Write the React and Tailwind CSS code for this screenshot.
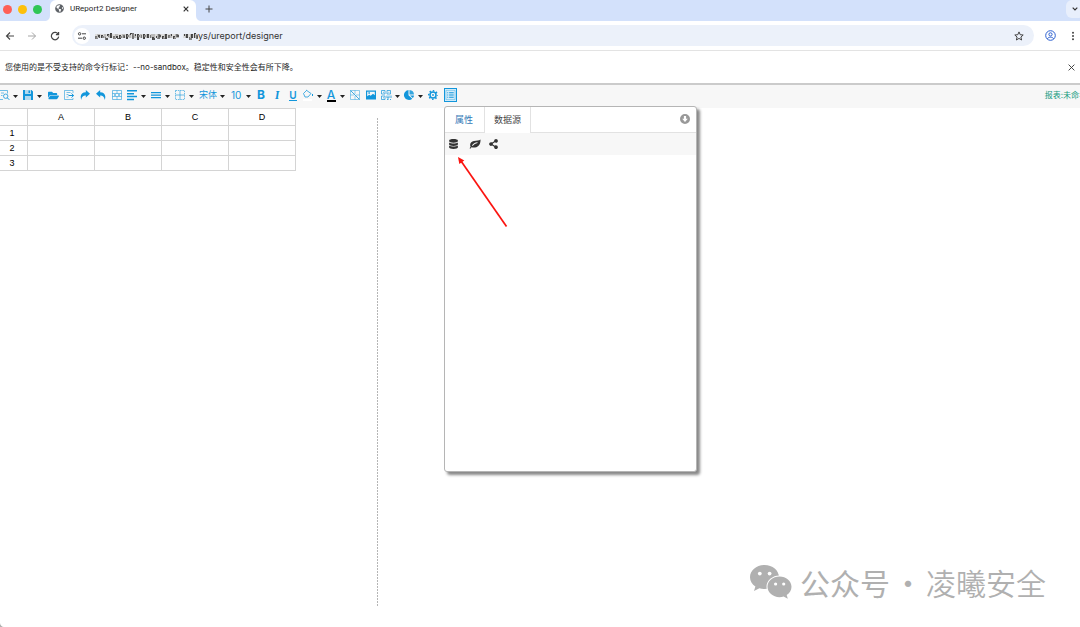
import React, { useState } from 'react';
import { FaDatabase, FaShareAlt, FaFolderOpen, FaGlobeAmericas } from 'react-icons/fa';

const MOSAIC = [
  [0, 4, 3], [3, 3, 2], [6, 3, 3], [10, 5, 3], [12, 2, 2], [15, 1, 5], [18, 4, 3], [21, 4, 2], [24, 3, 4],
  [28, 3, 3], [31, 2, 5], [35, 1, 2], [37, 1, 6], [40, 2, 2], [42, 2, 6], [46, 3, 3], [48, 2, 5], [52, 2, 4],
  [55, 3, 3], [57, 5, 3], [61, 4, 2], [63, 2, 5], [67, 4, 3], [70, 2, 5], [73, 3, 3], [76, 2, 2], [78, 4, 3],
  [81, 2, 3], [89, 2, 2], [91, 2, 4], [94, 5, 3], [96, 2, 4], [99, 1, 5], [101, 3, 4],
];

function Icon({ children, className = 'w-3 h-3', stroke = false, viewBox = '0 0 12 12' }) {
  return (
    <svg
      className={`shrink-0 ${className}`}
      viewBox={viewBox}
      fill={stroke ? 'none' : 'currentColor'}
      stroke={stroke ? 'currentColor' : 'none'}
      strokeWidth="1"
      aria-hidden="true"
    >
      {children}
    </svg>
  );
}

function Caret() {
  return (
    <svg className="w-[5px] h-[3px] shrink-0 mt-0.5" viewBox="0 0 5 3" fill="#222" aria-hidden="true">
      <path d="M0 0h5L2.500 3z" />
    </svg>
  );
}

function Tool({ label, children }) {
  return (
    <button type="button" title={label} aria-label={label} className="w-4 h-5 flex items-center justify-center shrink-0">
      {children}
    </button>
  );
}

function MenuTool({ label, tight, children }) {
  return (
    <button
      type="button"
      title={label}
      aria-label={label}
      aria-haspopup="true"
      className={`h-5 pl-px flex items-center gap-[3px] shrink-0 ${tight ? 'w-[23px]' : 'w-6'}`}
    >
      {children}
      <Caret />
    </button>
  );
}

function BrowserTabs() {
  return (
    <div className="h-[21px] flex items-center bg-[#d3e1fb]">
      <div className="w-[50px] pl-[3px] pb-[3px] flex items-center gap-1.5 shrink-0">
        <span className="w-[9px] h-[9px] rounded-full bg-[#fe5f57]" />
        <span className="w-[9px] h-[9px] rounded-full bg-[#fdc00a]" />
        <span className="w-[9px] h-[9px] rounded-full bg-[#2fc655]" />
      </div>
      <div className="relative w-[146px] h-full pl-[5px] pr-1.5 pb-1 flex items-center bg-white rounded-t-md shrink-0">
        <svg className="absolute -left-1.5 bottom-0 w-1.5 h-1.5" viewBox="0 0 6 6" fill="#fff" aria-hidden="true">
          <path d="M6 0v6H0c4 0 6-2 6-6z" />
        </svg>
        <svg className="absolute -right-1.5 bottom-0 w-1.5 h-1.5" viewBox="0 0 6 6" fill="#fff" aria-hidden="true">
          <path d="M0 0v6h6C2 6 0 4 0 0z" />
        </svg>
        <FaGlobeAmericas className="w-[9px] h-[9px] text-[#5f6368]" />
        <span className="ml-1.5 text-[8px] leading-3 text-[#1f1f1f] font-[Roboto,sans-serif]">UReport2 Designer</span>
        <button type="button" aria-label="Close tab" className="ml-auto w-2 h-2 flex items-center justify-center text-[#333]">
          <Icon stroke className="w-1.5 h-1.5" viewBox="0 0 6 6"><path d="M.7.700l4.600 4.600M5.300.700L.7 5.300" strokeWidth="1.200" /></Icon>
        </button>
      </div>
      <button type="button" aria-label="New tab" className="ml-2 mb-1 w-2.5 h-2.5 text-[#444]">
        <Icon stroke className="w-2.5 h-2.5" viewBox="0 0 10 10"><path d="M5 1.500v7M1.500 5h7" /></Icon>
      </button>
      <button type="button" aria-label="Search tabs" className="ml-auto mb-1 -mr-1 w-[18px] h-[18px] flex items-center justify-center rounded-md bg-[#e8effc] text-[#333]">
        <Icon stroke className="w-1.5 h-1.5" viewBox="0 0 6 6"><path d="M.7 1.700L3 4l2.300-2.300" strokeWidth="1.200" /></Icon>
      </button>
    </div>
  );
}

function AddressBar() {
  return (
    <div className="h-[30px] pl-[5px] pr-0.5 flex items-center border-b border-[#e3e3e3] text-[#444]">
      <button type="button" aria-label="Back">
        <Icon stroke className="w-2.5 h-2.5" viewBox="0 0 10 10"><path d="M9 5H1.500M5 1.500L1.500 5 5 8.500" strokeWidth="1.100" /></Icon>
      </button>
      <button type="button" aria-label="Forward" className="ml-3 text-[#a5a5a5]">
        <Icon stroke className="w-2.5 h-2.5" viewBox="0 0 10 10"><path d="M1 5h7.500M5 1.500L8.500 5 5 8.500" /></Icon>
      </button>
      <button type="button" aria-label="Reload" className="ml-[13px]">
        <Icon stroke className="w-2.5 h-2.5" viewBox="0 0 10 10"><path d="M8.300 3.300A3.700 3.700 0 1 0 8.700 5.700M8.600 1v2.700H5.900" strokeWidth="1.200" /></Icon>
      </button>
      <div className="ml-3 h-[21px] flex-1 flex items-center rounded-full bg-[#ecf1fa] pl-0.5 pr-2.5">
        <span className="w-4 h-4 rounded-full bg-white flex items-center justify-center">
          <Icon stroke className="w-2.5 h-2.5" viewBox="0 0 10 10">
            <circle cx="2.600" cy="2.800" r="1.200" />
            <circle cx="7.300" cy="7.200" r="1.200" />
            <path d="M5 2.800h4M1 7.200h4" />
          </Icon>
        </span>
        <svg className="ml-[5px] w-[103px] h-2.5 shrink-0" viewBox="0 0 103 10" aria-hidden="true">
          {MOSAIC.map(([x, y, h], i) => (
            <g key={x}>
              <rect x={x - 1} y="3" width="4" height="4" fill={i % 2 ? '#bbb' : '#ddd'} />
              <rect x={x} y={y + 1} width="2" height={h} fill={i % 3 ? '#444' : '#777'} />
              <rect x={x + 1} y={y + 2} width="2" height="2" fill={i % 2 ? '#555' : '#888'} />
            </g>
          ))}
        </svg>
        <input
          type="text"
          aria-label="Address"
          defaultValue="ys/ureport/designer"
          className="min-w-0 flex-1 bg-transparent text-[9px] leading-4 text-[#333] outline-none"
        />
        <button type="button" aria-label="Bookmark">
          <Icon stroke className="w-2.5 h-2.5" viewBox="0 0 10 10">
            <path d="M5 .9l1.200 2.800 3 .3-2.300 2 .7 3L5 7.400 2.400 9l.7-3L.8 4l3-.3z" />
          </Icon>
        </button>
      </div>
      <button type="button" aria-label="Profile" className="ml-[11px] text-[#2b5fd0]">
        <Icon stroke className="w-[11px] h-[11px]" viewBox="0 0 11 11">
          <circle cx="5.500" cy="5.500" r="4.800" />
          <circle cx="5.500" cy="4.400" r="1.600" />
          <path d="M2.300 8.700c1.500-2 4.900-2 6.400 0" />
        </Icon>
      </button>
      <button type="button" aria-label="More" className="ml-3">
        <Icon className="w-2.5 h-2.5" viewBox="0 0 10 10">
          <circle cx="5" cy="1.700" r="1" />
          <circle cx="5" cy="5" r="1" />
          <circle cx="5" cy="8.300" r="1" />
        </Icon>
      </button>
    </div>
  );
}

function InfoBar() {
  return (
    <div className="h-[34px] pl-[5px] pr-[5px] flex items-center justify-between border-b-2 border-[#cbcbcb]">
      <p className="text-[8px] leading-3 text-[#1f1f1f]">
        您使用的是不受支持的命令行标记：--no-sandbox。稳定性和安全性会有所下降。
      </p>
      <button type="button" aria-label="Dismiss" className="text-[#333]">
        <Icon stroke className="w-[7px] h-[7px]" viewBox="0 0 7 7"><path d="M.6.600l5.800 5.800M6.400.600L.6 6.400" strokeWidth=".9" /></Icon>
      </button>
    </div>
  );
}

function Toolbar() {
  return (
    <div className="h-[23px] pb-[3px] flex items-center bg-[#f7f7f7] text-[#1296db] overflow-hidden">
      <div role="toolbar" className="-ml-[3px] flex items-center shrink-0">
        <MenuTool label="预览">
          <Icon stroke>
            <path d="M1.500 1.500h8v3M1.500 1v9.500H5M3 4h3M3 6.500h1.500" opacity=".6" />
            <circle cx="7.700" cy="7.200" r="2.200" opacity=".8" />
            <path d="M9.300 8.800l2 2" />
          </Icon>
        </MenuTool>
        <MenuTool label="保存">
          <Icon>
            <path fillRule="evenodd" d="M1 1h8.500L11 2.500V11H1zM3 1v4h6V1zM3 7v4h6V7z" />
            <path d="M3 1h6v4H3zM3 7h6v4H3z" opacity=".3" />
            <path d="M6.500 1.500h1.500V4H6.500z" />
          </Icon>
        </MenuTool>
        <Tool label="打开"><FaFolderOpen className="w-[11px] h-[11px]" /></Tool>
        <Tool label="导入">
          <Icon stroke>
            <path d="M10 4V1.500H1.500v9H10V9M3.500 3.500h4M3.500 5.500h2M3.500 8h2" opacity=".55" />
            <path d="M5.500 6.500h5M8.500 4.500l2.200 2-2.200 2" />
          </Icon>
        </Tool>
        <Tool label="重做">
          <Icon className="w-2.5 h-2.5"><path d="M7 0l5 4.500L7 9V6.500C4 6.500 2.300 7.500 1.500 12-.5 6 2 2.700 7 2.600z" /></Icon>
        </Tool>
        <Tool label="撤消">
          <Icon className="w-2.5 h-2.5"><path d="M5 0L0 4.500 5 9V6.500c3 0 4.700 1 5.500 5.500 2-6-.5-9.300-5.500-9.400z" /></Icon>
        </Tool>
        <Tool label="合并单元格">
          <Icon stroke>
            <path d="M1.500 1.500h9v9h-9zM1.500 4.500h9M1.500 7.500h9M6 1.500v3M6 7.500v3" opacity=".55" />
            <path d="M3 6h2M7 6h2" />
          </Icon>
        </Tool>
        <MenuTool label="对齐">
          <Icon><path d="M1 1h10v1.500H1zM1 3.900h7v1.500H1zM1 6.800h10v1.500H1zM1 9.700h7v1.500H1z" /></Icon>
        </MenuTool>
        <MenuTool label="垂直对齐">
          <Icon><path d="M1 3h10v1.200H1zM1 5.500h10v1.200H1zM1 8h10v1.200H1z" /></Icon>
        </MenuTool>
        <MenuTool label="边框">
          <Icon stroke>
            <path d="M1.500 1.500h9v9h-9z" strokeDasharray="1.500 .8" opacity=".6" />
            <path d="M6 1.500v9M1.500 6h9" opacity=".6" />
          </Icon>
        </MenuTool>
        <label className="h-5 pl-0.5 pr-1 flex items-center gap-[3px] text-[9px]">
          <select aria-label="字体" className="w-[18px] appearance-none bg-transparent outline-none">
            <option>宋体</option>
          </select>
          <Caret />
        </label>
        <label className="h-5 pl-0.5 pr-0.5 flex items-center gap-[3px] text-[10px]">
          <select aria-label="字号" className="w-3 appearance-none bg-transparent outline-none">
            <option>10</option>
          </select>
          <Caret />
        </label>
        <Tool label="加粗"><span className="font-bold text-xs leading-3">B</span></Tool>
        <Tool label="斜体"><span className="font-serif font-bold italic text-xs leading-3">I</span></Tool>
        <Tool label="下划线"><span className="text-[10px] leading-[10px] font-semibold border-b border-current">U</span></Tool>
        <MenuTool label="背景色" tight>
          <Icon stroke>
            <path d="M4 1l5 3.500L6 8H3L1.500 4.500 4.500 1.500" opacity=".75" />
            <path d="M10.500 5v2" />
            <path d="M1 11h9" stroke="#fff" strokeWidth="2" />
          </Icon>
        </MenuTool>
        <MenuTool label="字体颜色" tight>
          <span className="w-3 flex flex-col items-center text-xs leading-[11px] font-medium">
            A
            <span className="w-[9px] h-0.5 bg-black" />
          </span>
        </MenuTool>
        <Tool label="斜表头">
          <Icon stroke>
            <path d="M1.500 1.500h9v9h-9zM1.500 6H5M6 1.500V5M7 6h3.500M6 7v3.500" opacity=".45" />
            <path d="M1.500 1.500l9 9" opacity=".8" />
          </Icon>
        </Tool>
        <Tool label="图片">
          <Icon><path fillRule="evenodd" d="M1 1.500h10v9H1zM2.200 2.700v4.500l2-1.500 1.500 1 2.300-2 1.800 1.500V2.700zM3.400 3.300h1.500v1.500H3.400z" /></Icon>
        </Tool>
        <MenuTool label="二维码" tight>
          <Icon stroke>
            <path d="M1.500 1.500h3.500v3.500H1.500zM7 1.500h3.500v3.500H7zM1.500 7h3.500v3.500H1.500z" opacity=".7" />
            <path d="M3 3.300h.8M8.500 3.300h.8M3 8.800h.8M7 6.500v2.500h2V6.500M11 6.500v2.500M7 10.500h1.500M10 10.500h1" opacity=".8" />
          </Icon>
        </MenuTool>
        <MenuTool label="图表" tight>
          <Icon>
            <path d="M5.500 1v5.200l3.800 3.500A5 5 0 1 1 5.500 1z" />
            <path d="M6.500 1A4.800 4.800 0 0 1 11 5.500H6.500z" opacity=".85" />
            <path d="M7 6.500h4a4 4 0 0 1-1.200 2.600z" />
          </Icon>
        </MenuTool>
        <Tool label="设置">
          <Icon stroke>
            <circle cx="6" cy="6" r="3" strokeWidth="1.500" />
            <circle cx="6" cy="6" r="4.300" strokeWidth="1.400" strokeDasharray="1.500 1.877" strokeDashoffset=".75" />
            <circle cx="6" cy="6" r=".9" fill="currentColor" stroke="none" />
          </Icon>
        </Tool>
        <button
          type="button"
          aria-label="属性面板"
          aria-pressed="true"
          className="ml-[3px] w-[13px] h-3.5 flex items-center justify-center border border-[#1296db] bg-[#d5edfa]"
        >
          <Icon className="w-[11px] h-3" stroke>
            <path d="M1 1h10v10H1z" opacity=".4" />
            <path d="M2.500 3.500h1M4.500 3.500h5M2.500 6h1M4.500 6h5M2.500 8.500h1M4.500 8.500h5" strokeWidth="1.200" />
          </Icon>
        </button>
      </div>
      <span className="ml-auto -mr-[7px] shrink-0 text-[8px] leading-3 text-[#129a7d]">报表:未命名</span>
    </div>
  );
}

function Sheet() {
  const columns = ['A', 'B', 'C', 'D'];
  return (
    <table className="-ml-1 w-[300px] table-fixed border-collapse text-[9px] leading-[14px] text-black font-['Liberation_Sans','Noto_Sans_CJK_SC',sans-serif]">
      <thead>
        <tr>
          <th className="w-[31px] h-[17px] p-0 border border-[#d4d4d4]" />
          {columns.map((c) => (
            <th key={c} scope="col" className="p-0 border border-[#d4d4d4] font-medium">{c}</th>
          ))}
        </tr>
      </thead>
      <tbody>
        {[1, 2, 3].map((row) => (
          <tr key={row}>
            <th scope="row" className="p-0 border border-[#d4d4d4] font-medium">{row}</th>
            {columns.map((c) => (
              <td key={c} className="p-0 border border-[#d4d4d4]" />
            ))}
          </tr>
        ))}
      </tbody>
    </table>
  );
}

function PropertyPanel() {
  const [tab, setTab] = useState('source');
  const tabs = [
    { id: 'props', label: '属性' },
    { id: 'source', label: '数据源' },
  ];

  return (
    <section className="absolute left-[444px] top-[106px] w-[253px] h-[366px] bg-white border border-[#b5b5b5] rounded-[3px] shadow-[3px_3px_3px_#888]">
      <div className="h-[26px] flex items-end border-b border-[#e2e2e2]">
        <div role="tablist" className="flex">
          {tabs.map((t) => (
            <button
              key={t.id}
              type="button"
              role="tab"
              aria-selected={tab === t.id}
              onClick={() => setTab(t.id)}
              className={`-mb-px h-[26px] text-[9px] ${
                tab === t.id ? 'px-[9px] bg-white border-x border-[#e2e2e2] text-[#444]' : 'pl-2.5 pr-[11px] text-[#337ab7]'
              }`}
            >
              {t.label}
            </button>
          ))}
        </div>
        <button type="button" aria-label="收起" className="ml-auto mr-1.5 mb-2 text-[#999]">
          <Icon className="w-2.5 h-2.5" viewBox="0 0 10 10">
            <path fillRule="evenodd" d="M5 0a5 5 0 1 0 0 10A5 5 0 0 0 5 0zM3.900 2h2.200v2.700h1.700L5 8 2.200 4.700h1.700z" />
          </Icon>
        </button>
      </div>
      <div className="h-[22px] pl-1 flex items-center bg-[#f7f7f7] text-[#333]">
        <button type="button" aria-label="添加数据库连接" className="w-5"><FaDatabase className="w-[9px] h-[10px]" /></button>
        <button type="button" aria-label="添加Spring Bean数据源" className="w-5">
          <Icon className="w-3 h-3">
            <path fillRule="evenodd" d="M11.500 1.500c.2 4-1.500 7.500-5.500 8-1.500.2-2.600-.2-3.500-.2L1.300 10.800.6 10.200l1-1.400C.3 6 2 3.500 5 3c2.700-.4 5-.2 6.500-1.500zM8.500 4.300C6 4.600 4 5.700 3 7.500l.6.500C5 6.300 6.500 5.500 8.600 5z" />
          </Icon>
        </button>
        <button type="button" aria-label="添加内置数据源"><FaShareAlt className="w-[9px] h-[10px]" /></button>
      </div>
    </section>
  );
}

function Watermark() {
  return (
    <div className="absolute right-[34px] top-[564px] flex items-center text-[#b0b0b0]">
      <svg className="w-[43px] h-9" viewBox="0 0 43 36" fill="currentColor" aria-hidden="true">
        <path d="M15.500 1C7.500 1 1 6.400 1 13.200c0 3.800 2.100 7 5.400 9.300L5 27l5.400-2.700c1.600.5 3.300.8 5.100.8 8 0 14.500-5.300 14.500-12S23.500 1 15.500 1z" />
        <ellipse cx="30.500" cy="23" rx="13" ry="11.500" fill="#fff" />
        <path d="M30.500 12.500c-6.700 0-12 4.600-12 10.300s5.300 10.400 12 10.400c1.400 0 2.800-.2 4.100-.6l4.200 2.200-1.100-3.700c2.900-1.900 4.800-4.900 4.800-8.300 0-5.700-5.400-10.300-12-10.300z" />
        <g fill="#fff">
          <circle cx="10.800" cy="9.600" r="1.900" />
          <circle cx="20.600" cy="9.600" r="1.900" />
          <circle cx="26.600" cy="20" r="1.600" />
          <circle cx="34.700" cy="20" r="1.600" />
        </g>
      </svg>
      <p className="ml-2 flex text-[30px] leading-9 font-normal font-['Noto_Sans_CJK_SC',sans-serif]">
        <span>公众号</span>
        <span className="w-9 text-center">·</span>
        <span className="font-[350]">凌曦安全</span>
      </p>
    </div>
  );
}

function App() {
  return (
    <div className="relative min-h-screen flex flex-col overflow-hidden bg-white font-['Inter','Noto_Sans_CJK_SC',sans-serif]">
      <header>
        <BrowserTabs />
        <AddressBar />
        <InfoBar />
      </header>
      <Toolbar />
      <main className="flex-1 flex">
        <div className="w-[377px] shrink-0">
          <Sheet />
        </div>
        <div className="mt-2.5 mb-5 w-px bg-[repeating-linear-gradient(#b5b5b5_0_2px,#fff_2px_3px)]" />
      </main>

      <PropertyPanel />

      {/* pointer to the database button */}
      <svg className="absolute left-[457px] top-[156px] w-[52px] h-[72px]" viewBox="0 0 52 72" aria-hidden="true">
        <path d="M4 5l45.500 65.500" stroke="#fb1410" strokeWidth="1.700" fill="none" />
        <path d="M1 1l6.300 3.400L2.300 8z" fill="#fb1410" />
      </svg>

      <Watermark />

      <svg className="absolute left-0 bottom-0 w-1 h-1" viewBox="0 0 4 4" fill="#b0b0b0" aria-hidden="true">
        <path d="M0 0c0 2 2 4 4 4H0z" />
      </svg>
    </div>
  );
}

export default App;
